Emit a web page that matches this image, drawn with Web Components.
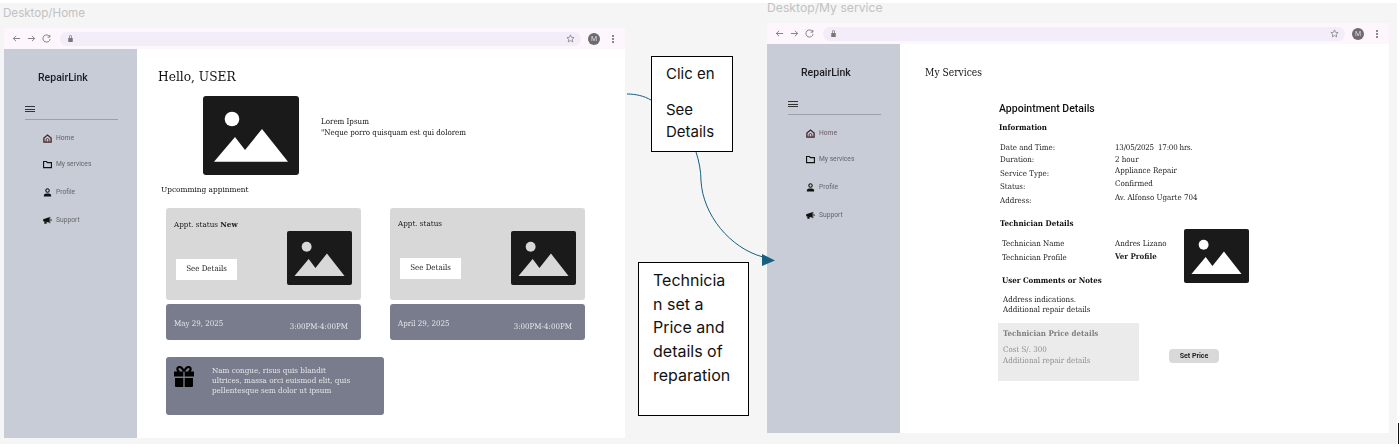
<!DOCTYPE html>
<html lang="en">
<head>
<meta charset="utf-8">
<title>RepairLink flows</title>
<style>
  html, body { margin: 0; height: 100%; background: #fff; overflow: hidden; }
  .board { position: relative; width: 1397px; height: 441px; margin-top: 3px; background: #f5f5f5; font-family: "Roboto", sans-serif; }
  browser-frame { filter: blur(.3px); }
  .home { position: absolute; left: 4px; top: 25px; width: 621px; }
  .service { position: absolute; left: 767px; top: 20px; }
  .frame-title { position: absolute; font: 11.6px "Inter", sans-serif; color: #c2c2c2; }
  .links { position: absolute; left: 0; top: 0; }
  .clic { position: absolute; left: 651px; top: 53px; width: 82px; height: 96px; }
  .tech { position: absolute; left: 638px; top: 259px; width: 111px; height: 154px; }
  .gap { display: block; height: 14px; }
  .cursor { position: absolute; left: 1398px; top: 420px; width: 1px; height: 21px; background: #111; }
</style>
</head>
<body>
<template id="picture-tpl">
  <style>
    :host { display: block; }
    svg { display: block; width: 100%; height: 100%; }
  </style>
  <svg viewBox="0 0 96 79" preserveAspectRatio="none">
    <rect width="96" height="79" rx="3" fill="#1a1a1a"/>
    <circle cx="29" cy="23" r="7.3" fill="var(--mark, #fff)"/>
    <path d="M11 65.7L32 41L42 54L59 33L85 65.7Z" fill="var(--mark, #fff)"/>
  </svg>
</template>

<template id="frame-tpl">
  <style>
    :host { display: flex; flex-direction: column; width: 622px; height: 410px; background: #fff; }
    .bar { display: flex; align-items: center; height: 21px; flex: none; background: #fdf6fd; padding-left: 8px; box-sizing: border-box; }
    .bar svg { display: block; width: 9px; height: 9px; margin-right: 6px; fill: none; stroke: #777; stroke-width: 1; }
    .url { flex: 1; display: flex; align-items: center; justify-content: space-between; height: 14px; margin-left: 3px; padding: 0 6px; background: #f2edf8; border-radius: 7px; }
    .url svg { margin: 0; }
    .avatar { width: 12px; height: 12px; margin-left: 7px; border-radius: 50%; background: #6e6a6e; color: #ddd; font: 7px/12px "Roboto", sans-serif; text-align: center; }
    .dots { display: grid; gap: 1px; margin: 0 11.5px; }
    .dots i { display: block; width: 2px; height: 2px; border-radius: 50%; background: #666; }
    .body { flex: 1; display: flex; min-height: 0; }
    .main { flex: 1; min-width: 0; display: block; }
  </style>
  <div class="bar">
    <svg viewBox="0 0 10 10"><path d="M9 5H1.500M4.500 2L1.500 5l3 3"/></svg>
    <svg viewBox="0 0 10 10"><path d="M1 5h7.500M5.500 2l3 3-3 3"/></svg>
    <svg viewBox="0 0 10 10"><path d="M8.500 3A4 4 0 1 0 9 5.500M8.700 1v2.500H6.200"/></svg>
    <div class="url">
      <svg viewBox="0 0 10 10" style="stroke:none;fill:#777"><path d="M2.500 4.500h5v4.500h-5zM3.500 4.500V3a1.500 1.500 0 0 1 3 0v1.500h-.8V3a.7.7 0 0 0-1.400 0v1.500z"/></svg>
      <svg viewBox="0 0 10 10" style="stroke-width:.8"><path d="M5 1l1.200 2.700 2.800.3-2.100 1.900.6 2.900L5 7.300 2.500 8.800l.6-2.900L1 4l2.800-.3z"/></svg>
    </div>
    <div class="avatar">M</div>
    <div class="dots"><i></i><i></i><i></i></div>
  </div>
  <div class="body">
    <repair-sidebar></repair-sidebar>
    <div class="main"><slot></slot></div>
  </div>
</template>

<template id="sidebar-tpl">
  <style>
    :host { display: flex; flex-direction: column; flex: none; width: 133px; background: #c8ccd6; box-sizing: border-box; padding-left: 21px; }
    .brand { font: 500 10.5px/14px "Roboto", sans-serif; color: #1c1c22; margin: 22px 0 0 13px; }
    .menu { width: 10px; margin: 21px 0 0 0; display: grid; gap: 1.4px; }
    .menu i { display: block; height: 1.2px; background: #333; }
    hr { width: 93px; margin: 7px 0 0 0; border: 0; border-top: 1px solid #9da0aa; }
    nav { display: flex; flex-direction: column; margin: 12px 0 0 18px; }
    a { display: flex; align-items: center; height: 12px; font: 6.7px/12px "Roboto", sans-serif; color: #66656b; margin-bottom: 16px; }
    a:first-child { margin-bottom: 14px; }
    svg { display: block; width: 9px; height: 9px; margin-right: 4px; flex: none; }
    .on { color: #6a5a62; }
  </style>
  <div class="brand">RepairLink</div>
  <div class="menu"><i></i><i></i><i></i></div>
  <hr>
  <nav>
    <a class="on"><svg viewBox="0 0 10 10"><path d="M1 4.500L5 1.200l4 3.300V9H1z" fill="none" stroke="#43262e" stroke-width="1.500"/><path d="M3.500 9V6.500a1.500 1.500 0 0 1 3 0V9" fill="none" stroke="#43262e"/></svg>Home</a>
    <a><svg viewBox="0 0 10 10"><path d="M.6 1.700h3.300l1 1.200h4.500v5.500H.6z" fill="none" stroke="#111" stroke-width="1.300"/></svg>My services</a>
    <a><svg viewBox="0 0 10 10"><circle cx="5" cy="2.800" r="1.900" fill="none" stroke="#111" stroke-width="1.200"/><path d="M1 9.500V7.500C2 5.800 8 5.800 9 7.500V9.500z" fill="#111"/></svg>Profile</a>
    <a><svg viewBox="0 0 10 10"><path d="M.2 3.500L6.800 1.300v6L.2 5.800z" fill="#111"/><path d="M1.500 5.500V8.500H4V6.500" fill="#111"/><path d="M7.500 1v7M8.300 4.500H10" stroke="#111" stroke-width="1"/></svg>Support</a>
  </nav>
</template>

<template id="appt-tpl">
  <style>
    :host { display: flex; flex-direction: column; gap: 4px; width: 195px; font-family: "DejaVu Serif Condensed", "DejaVu Serif", serif; }
    .top { display: flex; justify-content: space-between; height: 92px; padding: 10px 9px 0 8px; box-sizing: border-box; background: #d8d8d8; border-radius: 3px; }
    .left { display: flex; flex-direction: column; align-items: flex-start; }
    .status { font-size: 8px; line-height: 12px; color: #222; }
    .btn { width: 61px; height: 21px; margin: 28px 0 0 2px; background: #fff; font-size: 7.9px; line-height: 19px; text-align: center; color: #222; }
    repair-picture { width: 65px; height: 54px; margin-top: 13px; --mark: #d8d8d8; }
    .date { display: flex; justify-content: space-between; height: 36px; padding: 14px 13px 0 8px; box-sizing: border-box; background: #787c8c; border-radius: 3px; color: #e6e6ea; font-size: 7.9px; line-height: 12px; }
    .date span + span { margin-top: 3px; }
    b { font-weight: 700; }
  </style>
  <div class="top">
    <div class="left">
      <div class="status"><slot name="status"></slot></div>
      <div class="btn">See Details</div>
    </div>
    <repair-picture></repair-picture>
  </div>
  <div class="date"><span><slot name="date"></slot></span><span>3:00PM-4:00PM</span></div>
</template>

<template id="note-tpl">
  <style>
    :host { display: flex; width: 218px; height: 58px; padding: 9px 0 0 7px; box-sizing: border-box; margin-top: 17px; background: #787c8c; border-radius: 3px; }
    svg { display: block; width: 22px; height: 21px; flex: none; margin-right: 17px; }
    p { margin: 0; font: 8px/10.2px "DejaVu Serif Condensed", "DejaVu Serif", serif; color: #e4e4e8; }
  </style>
  <svg viewBox="0 0 22 21">
    <path d="M1 5.500h9.300v5H1zM11.700 5.500H21v5h-9.300zM2 12h8.300v9H3a1 1 0 0 1-1-1zM11.700 12H20v8a1 1 0 0 1-1 1h-7.300z" fill="#000"/>
    <path d="M11 5.500C9 1.500 7 .6 5.500 1.200 3.800 2 4 5 6.500 5.500M11 5.500c2-4 4-4.900 5.500-4.300 1.700.8 1.500 3.800-1 4.300" fill="none" stroke="#000" stroke-width="2.200"/>
  </svg>
  <p><slot></slot></p>
</template>

<template id="home-tpl">
  <style>
    :host { display: block; padding-left: 21px; font-family: "DejaVu Serif Condensed", "DejaVu Serif", serif; color: #111; }
    h1 { margin: 0; padding-top: 18px; font-size: 13.6px; line-height: 18px; font-weight: 400; }
    .hero { display: flex; margin: 11px 0 0 45px; }
    repair-picture { width: 96px; height: 79px; }
    .lorem { margin: 21px 0 0 22px; font-size: 7.9px; line-height: 10.5px; }
    .next { margin: 8px 0 0 3px; font-size: 8.2px; line-height: 12px; }
    .cards { display: grid; grid-template-columns: 195px 195px; column-gap: 29px; margin: 13px 0 0 8px; }
  </style>
  <h1>Hello, USER</h1>
  <div class="hero">
    <repair-picture></repair-picture>
    <div class="lorem">Lorem Ipsum<br>"Neque porro quisquam est qui dolorem</div>
  </div>
  <div class="next">Upcomming appinment</div>
  <div class="cards"><slot></slot></div>
</template>

<template id="details-tpl">
  <style>
    :host { display: block; font-family: "DejaVu Serif Condensed", "DejaVu Serif", serif; color: #222; font-size: 7.9px; line-height: 12px; }
    h1 { margin: 0; padding: 22px 0 0 25px; font-size: 10.2px; line-height: 14px; font-weight: 400; color: #111; }
    .panel { margin: 22px 0 0 99px; }
    h2 { margin: 0; font: 500 10.5px/14px "Roboto", sans-serif; color: #111; }
    h3 { margin: 0; font-size: 7.9px; line-height: 12px; font-weight: 700; color: #111; }
    .info { display: flex; margin: 8px 0 0 1px; }
    .labels { width: 115px; }
    .m2 { margin-top: 2px; }
    .m1 { margin-top: 1px; }
    .n1 { margin-top: -1px; }
    .when { letter-spacing: -.2px; }
    .tech { display: flex; margin: 11px 0 0 1px; }
    .tech-text { width: 184px; }
    .tech-grid { display: grid; grid-template-columns: 113px 1fr; row-gap: 2px; margin: 8px 0 0 2px; }
    .ver { margin-top: -1px; }
    .tech-text h3.notes { margin: 11px 0 0 2px; }
    .tech-text p { margin: 8px 0 0 3px; line-height: 10.2px; }
    repair-picture { width: 65px; height: 54px; margin-top: 11px; }
    .price-row { display: flex; align-items: center; margin: 8px 0 0 -1px; }
    .price { width: 141px; height: 58px; box-sizing: border-box; padding: 5px 0 0 5px; background: #ebebeb; color: #8f8f8f; line-height: 10.2px; }
    .price h3 { color: #808080; margin-bottom: 5px; }
    button { width: 50px; height: 14px; margin: 8px 0 0 30px; padding: 0; border: 0; border-radius: 4px; background: #d9d9d9; color: #222; font: 700 7px/14px "Roboto", sans-serif; }
  </style>
  <h1>My Services</h1>
  <div class="panel">
    <h2>Appointment Details</h2>
    <h3 style="margin-top:6px">Information</h3>
    <div class="info">
      <div class="labels">
        <div>Date and Time:</div>
        <div>Duration:</div>
        <div class="m2">Service Type:</div>
        <div class="m1">Status:</div>
        <div class="m2">Address:</div>
      </div>
      <div>
        <div class="when">13/05/2025&nbsp; 17:00 hrs.</div>
        <div>2 hour</div>
        <div class="n1">Appliance Repair</div>
        <div class="m1">Confirmed</div>
        <div class="m2">Av. Alfonso Ugarte 704</div>
      </div>
    </div>
    <div class="tech">
      <div class="tech-text">
        <h3>Technician Details</h3>
        <div class="tech-grid">
          <div>Technician Name</div><div>Andres Lizano</div>
          <div>Technician Profile</div><div class="ver"><b>Ver Profile</b></div>
        </div>
        <h3 class="notes">User Comments or Notes</h3>
        <p>Address indications.<br>Additional repair details</p>
      </div>
      <repair-picture></repair-picture>
    </div>
    <div class="price-row">
      <div class="price">
        <h3>Technician Price details</h3>
        Cost S/. 300<br>Additional repair details
      </div>
      <button>Set Price</button>
    </div>
  </div>
</template>

<template id="callout-tpl">
  <style>
    :host { display: block; box-sizing: border-box; background: #fff; border: 1px solid #000; color: #111; font: var(--size, 15px)/var(--lead, 22px) "Inter", sans-serif; padding: var(--pad, 6px 2px 0 14px); }
  </style>
  <slot></slot>
</template>

<script>
  function stamp(host, id) {
    const root = host.attachShadow({ mode: 'open' });
    root.appendChild(document.getElementById(id).content.cloneNode(true));
  }
  class RepairPicture extends HTMLElement { connectedCallback() { stamp(this, 'picture-tpl'); } }
  class RepairSidebar extends HTMLElement { connectedCallback() { stamp(this, 'sidebar-tpl'); } }
  class BrowserFrame extends HTMLElement { connectedCallback() { stamp(this, 'frame-tpl'); } }
  class ApptCard extends HTMLElement { connectedCallback() { stamp(this, 'appt-tpl'); } }
  class PromoNote extends HTMLElement { connectedCallback() { stamp(this, 'note-tpl'); } }
  class HomeView extends HTMLElement { connectedCallback() { stamp(this, 'home-tpl'); } }
  class ServiceDetails extends HTMLElement { connectedCallback() { stamp(this, 'details-tpl'); } }
  class FlowCallout extends HTMLElement { connectedCallback() { stamp(this, 'callout-tpl'); } }

  customElements.define('repair-picture', RepairPicture);
  customElements.define('repair-sidebar', RepairSidebar);
  customElements.define('browser-frame', BrowserFrame);
  customElements.define('appt-card', ApptCard);
  customElements.define('promo-note', PromoNote);
  customElements.define('home-view', HomeView);
  customElements.define('service-details', ServiceDetails);
  customElements.define('flow-callout', FlowCallout);
</script>

<div class="board">
  <div class="frame-title" style="left:3px;top:3px">Desktop/Home</div>
  <div class="frame-title" style="left:767px;top:-3px;font-size:12.2px">Desktop/My service</div>

  <browser-frame class="home">
    <home-view>
      <appt-card>
        <span slot="status">Appt. status <b>New</b></span>
        <span slot="date">May 29, 2025</span>
      </appt-card>
      <appt-card>
        <span slot="status">Appt. status</span>
        <span slot="date">April 29, 2025</span>
      </appt-card>
      <promo-note>Nam congue, risus quis blandit<br>ultrices, massa orci euismod elit, quis<br>pellentesque sem dolor ut ipsum</promo-note>
    </home-view>
  </browser-frame>

  <browser-frame class="service">
    <service-details></service-details>
  </browser-frame>

  <svg class="links" width="1397" height="441" viewBox="0 0 1397 441" fill="none">
    <path d="M627 91C636 91 644 93 651 97" stroke="#156082"/>
    <path d="M696 149C699 158 701 168 701 178C703 212 730 245 763 254" stroke="#156082"/>
    <path d="M762 251L775 257.500L762 263Z" fill="#156082"/>
  </svg>

  <flow-callout class="clic">Clic en<span class="gap"></span>See<br>Details</flow-callout>
  <flow-callout class="tech" style="--size:16px;--lead:23.7px;--pad:6px 2px 0 14px">Technicia<br>n set a<br>Price and<br>details of<br>reparation</flow-callout>
  <div class="cursor"></div>
</div>
</body>
</html>
